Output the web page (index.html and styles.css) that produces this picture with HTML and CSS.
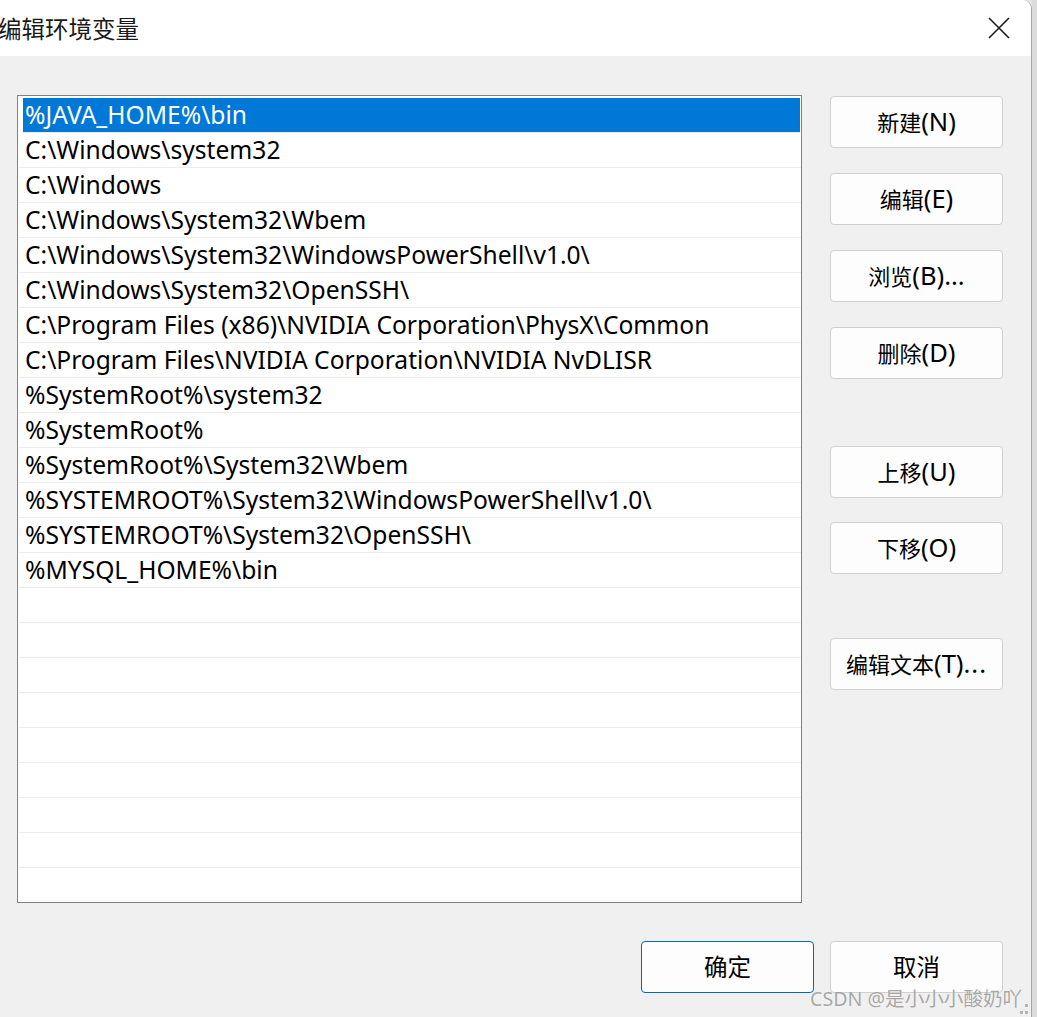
FILE: index.html
```html
<!DOCTYPE html>
<html>
<head>
    <meta charset="utf-8">
    <title>编辑环境变量</title>
    <link rel="stylesheet" href="styles.css">
</head>
<body>
    <div class="window">
        <div class="titlebar">
            <span class="title">编辑环境变量</span>
            <svg class="close" width="22" height="22" viewBox="0 0 22 22">
                <path d="M1 1 L21 21 M21 1 L1 21" stroke="#1b1b1b" stroke-width="1.6" fill="none"/>
            </svg>
        </div>

        <div class="content">
            <div class="main">
                <div class="list">
                    <div class="row selected">%JAVA_HOME%\bin</div>
                    <div class="row">C:\Windows\system32</div>
                    <div class="row">C:\Windows</div>
                    <div class="row">C:\Windows\System32\Wbem</div>
                    <div class="row">C:\Windows\System32\WindowsPowerShell\v1.0\</div>
                    <div class="row">C:\Windows\System32\OpenSSH\</div>
                    <div class="row">C:\Program Files (x86)\NVIDIA Corporation\PhysX\Common</div>
                    <div class="row">C:\Program Files\NVIDIA Corporation\NVIDIA NvDLISR</div>
                    <div class="row">%SystemRoot%\system32</div>
                    <div class="row">%SystemRoot%</div>
                    <div class="row">%SystemRoot%\System32\Wbem</div>
                    <div class="row">%SYSTEMROOT%\System32\WindowsPowerShell\v1.0\</div>
                    <div class="row">%SYSTEMROOT%\System32\OpenSSH\</div>
                    <div class="row">%MYSQL_HOME%\bin</div>
                    <div class="row"></div>
                    <div class="row"></div>
                    <div class="row"></div>
                    <div class="row"></div>
                    <div class="row"></div>
                    <div class="row"></div>
                    <div class="row"></div>
                    <div class="row"></div>
                    <div class="row"></div>
                </div>

                <div class="side">
                    <div class="group">
                        <button class="btn"><span class="cjk">新建</span>(N)</button>
                        <button class="btn"><span class="cjk">编辑</span>(E)</button>
                        <button class="btn"><span class="cjk">浏览</span>(B)...</button>
                        <button class="btn"><span class="cjk">删除</span>(D)</button>
                    </div>
                    <div class="group tight">
                        <button class="btn"><span class="cjk">上移</span>(U)</button>
                        <button class="btn"><span class="cjk">下移</span>(O)</button>
                    </div>
                    <div class="group">
                        <button class="btn"><span class="cjk">编辑文本</span>(T)<span class="dots">...</span></button>
                    </div>
                </div>
            </div>

            <div class="footer">
                <button class="btn default"><span class="cjk">确定</span></button>
                <button class="btn"><span class="cjk">取消</span></button>
            </div>
        </div>

        <div class="watermark">CSDN @是小小小酸奶吖</div>
        <div class="grip">
            <i></i><i></i><i></i>
        </div>
    </div>
    <div class="strip"></div>
</body>
</html>
```

FILE: styles.css
```css
html, body {
    margin: 0;
    padding: 0;
    height: 100%;
    overflow: hidden;
}
body {
    display: flex;
    background: #e4e4e4;
    font-family: "Noto Sans", "Noto Sans CJK SC", sans-serif;
    color: #000;
}
.window {
    position: relative;
    width: 1031px;
    height: 1017px;
    flex-shrink: 0;
    background: #f0f0f0;
    border-right: 1px solid #a6a6a6;
    border-top-right-radius: 9px;
    overflow: hidden;
}
.strip {
    flex: 1;
    background: #dcdcdc;
}

/* title bar */
.titlebar {
    height: 56px;
    background: #fff;
    display: flex;
    align-items: center;
    justify-content: space-between;
}
.title {
    margin-left: -2px;
    font-family: "Noto Sans CJK SC", sans-serif;
    font-size: 23.5px;
    color: #1a1a1a;
}
.close {
    margin-right: 21px;
    margin-top: -1px;
}

/* body */
.content {
    padding: 39px 0 0 17px;
}
.main {
    display: flex;
    gap: 28px;
}
.list {
    width: 783px;
    height: 804px;
    padding-top: 2px;
    border: 1px solid #828282;
    background: #fff;
    overflow: hidden;
    box-sizing: content-box;
}
.list .row {
    height: 34px;
    line-height: 34px;
    margin-left: 1px;
    padding-left: 6px;
    border-bottom: 1px solid #ececec;
    font-size: 24.6px;
    white-space: nowrap;
}
.list .row.selected {
    margin-left: 5px;
    margin-right: 1px;
    padding-left: 2px;
    background: #0078d7;
    color: #fff;
}

.side {
    display: flex;
    flex-direction: column;
    padding-top: 1px;
}
.group {
    display: flex;
    flex-direction: column;
    gap: 25px;
    margin-bottom: 67px;
}
.group.tight {
    gap: 24px;
    margin-bottom: 64px;
}

.btn {
    width: 173px;
    height: 52px;
    padding: 0;
    border: 1px solid #d0d0d0;
    border-radius: 4px;
    background: #fdfdfd;
    font-family: "Noto Sans", "Noto Sans CJK SC", sans-serif;
    font-size: 25.5px;
    line-height: 1;
    color: #000;
}
.btn .cjk {
    font-family: "Noto Sans CJK SC", sans-serif;
    font-size: 22px;
}
.btn .dots {
    letter-spacing: 1px;
}
.btn.default {
    border-color: #0067c0;
}

.footer {
    display: flex;
    justify-content: flex-end;
    gap: 16px;
    margin-top: 38px;
    margin-right: 28px;
}
.footer .btn .cjk {
    font-size: 23.5px;
}

/* overlays */
.watermark {
    position: absolute;
    left: 810px;
    top: 983px;
    font-family: "Noto Sans", "Noto Sans CJK SC", sans-serif;
    font-size: 19.6px;
    color: rgba(130, 130, 130, 0.7);
    text-shadow: 0 0 1px rgba(255, 255, 255, 0.8);
    white-space: nowrap;
}
.grip {
    position: absolute;
    right: 3px;
    bottom: 3px;
    width: 10px;
    height: 10px;
}
.grip i {
    position: absolute;
    width: 3px;
    height: 3px;
    background: #b5b5b5;
}
.grip i:nth-child(1) { right: 0; top: 0; }
.grip i:nth-child(2) { right: 0; bottom: 0; }
.grip i:nth-child(3) { right: 5px; bottom: 0; }
```
